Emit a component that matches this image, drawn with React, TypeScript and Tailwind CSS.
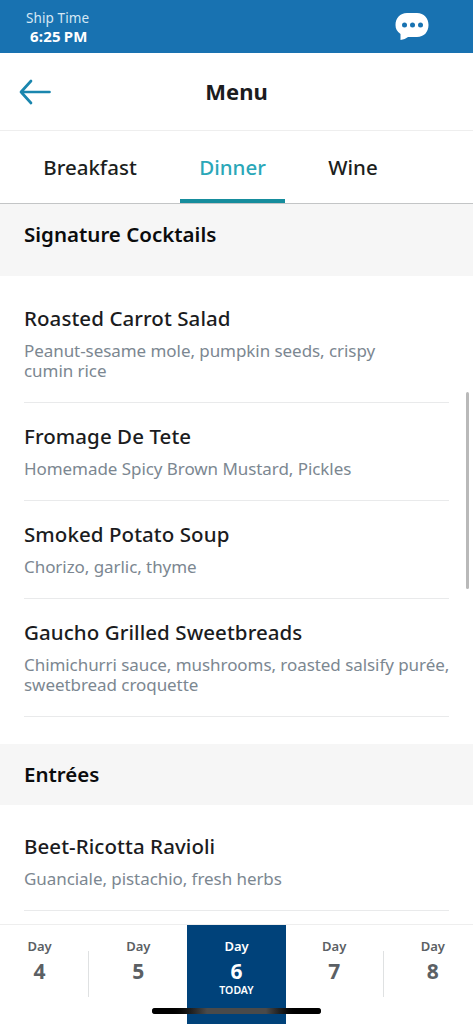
import React from "react";

const tabs = [
  { label: "Breakfast", className: "w-[180px] text-[#1c1e20]", active: false },
  { label: "Dinner", className: "w-[105px] text-[#2aa7b8]", active: true },
  { label: "Wine", className: "w-[136px] text-[#1c1e20]", active: false },
];

const cocktails = [
  {
    name: "Roasted Carrot Salad",
    description: "Peanut-sesame mole, pumpkin seeds, crispy\ncumin rice",
  },
  {
    name: "Fromage De Tete",
    description: "Homemade Spicy Brown Mustard, Pickles",
  },
  { name: "Smoked Potato Soup", description: "Chorizo, garlic, thyme" },
  {
    name: "Gaucho Grilled Sweetbreads",
    description:
      "Chimichurri sauce, mushrooms, roasted salsify purée,\nsweetbread croquette",
  },
];

const entrees = [
  {
    name: "Beet-Ricotta Ravioli",
    description: "Guanciale, pistachio, fresh herbs",
  },
];

const days = [
  { day: 4, today: false, divider: true },
  { day: 5, today: false, divider: false },
  { day: 6, today: true, divider: false },
  { day: 7, today: false, divider: true },
  { day: 8, today: false, divider: false },
];

const StatusHeader: React.FC = () => (
  <header className="flex h-[53px] shrink-0 items-start justify-between bg-[#1872b1] pr-[44px] pl-[26px] text-white">
    <div className="pt-[10px]">
      <div className="text-[13.5px] leading-[17px] tracking-[0.1px] text-[#d5e8f5]">
        Ship Time
      </div>
      <div className="pl-1 text-[15px] leading-[18px] font-bold tracking-[0.2px] [word-spacing:-1px]">
        6:25 PM
      </div>
    </div>
    <svg className="mt-3 h-[29px] w-[34px]" viewBox="0 0 34 29" fill="none">
      <path
        d="M12 1H22C29 1 33.5 6 33.5 13C33.5 20 29 25 22 25H13C11 26.5 8.5 27.5 5.5 28V22C2 19.5 .5 17 .5 13C.5 6 5 1 12 1Z"
        fill="white"
      />
      <circle cx="9.5" cy="13" r="2.5" fill="#1872b1" />
      <circle cx="17.5" cy="13" r="2.5" fill="#1872b1" />
      <circle cx="25.5" cy="13" r="2.5" fill="#1872b1" />
    </svg>
  </header>
);

const MenuItem: React.FC<{ name: string; description: string }> = ({
  name,
  description,
}) => (
  <li className="border-b border-[#e9eaeb] pt-5 pb-[21px]">
    <h3 className="text-[20.5px] leading-[26px] font-medium tracking-[0.07px] text-[#1b1c1e]">
      {name}
    </h3>
    <p className="pt-[10px] text-[17px] leading-5 tracking-[-0.06px] whitespace-pre text-[#7c8791]">
      {description}
    </p>
  </li>
);

export default function App() {
  return (
    <div className="relative flex h-[1024px] w-[473px] flex-col overflow-hidden bg-white font-['Noto_Sans','Liberation_Sans',sans-serif]">
      <StatusHeader />

      <div className="grid h-[78px] shrink-0 grid-cols-[1fr_auto_1fr] items-center border-b border-[#eeeeee] px-[19px]">
        <svg
          className="h-[26px] w-[33px]"
          viewBox="0 0 33 26"
          fill="none"
          stroke="#1a86ae"
          strokeWidth="2.7"
          strokeLinecap="round"
          strokeLinejoin="round"
        >
          <path d="M30.5 13H2M12 2L2 13L12 24" />
        </svg>
        <h1 className="text-[22px] font-bold text-[#1b1c1e]">Menu</h1>
      </div>

      <nav className="flex h-[73px] shrink-0 border-b border-[#c3c5c6]">
        {tabs.map((tab) => (
          <div
            key={tab.label}
            className={`flex flex-col justify-between text-center text-[20.5px] font-medium ${tab.className}`}
          >
            <span className="pt-[23px] leading-[26px]">{tab.label}</span>
            {tab.active && <span className="h-1 bg-[#168d9d]" />}
          </div>
        ))}
      </nav>

      <main className="min-h-0 flex-1 overflow-hidden">
        <h2 className="h-[72px] bg-[#f6f6f6] px-6 pt-[17px] text-[20.5px] leading-[26px] font-semibold text-[#0b0c0d]">
          Signature Cocktails
        </h2>
        <ul className="px-6 pt-[9px] pb-[27px]">
          {cocktails.map((item) => (
            <MenuItem key={item.name} {...item} />
          ))}
        </ul>
        <h2 className="h-[61px] bg-[#f6f6f6] px-6 pt-[17px] text-[20.5px] leading-[26px] font-semibold text-[#0b0c0d]">
          Entrées
        </h2>
        <ul className="px-6 pt-2">
          {entrees.map((item) => (
            <MenuItem key={item.name} {...item} />
          ))}
        </ul>
      </main>

      <footer className="flex h-[100px] shrink-0 justify-center border-t border-[#eeeeee]">
        {days.map(({ day, today, divider }) => (
          <div
            key={day}
            className={`flex w-[98.2px] shrink-0 ${today ? "bg-[#00427a] text-white" : "text-[#5b6064]"}`}
          >
            <div className="flex flex-1 flex-col items-center pt-[13px] font-semibold">
              <span className="text-[13px] leading-[17px]">Day</span>
              <span className="pt-1 text-[21px] leading-[24px] font-bold">
                {day}
              </span>
              {today && (
                <span className="text-[10.5px] leading-[14px]">TODAY</span>
              )}
            </div>
            {divider && <div className="mt-[26px] h-[46px] w-px bg-[#dfe1e2]" />}
          </div>
        ))}
      </footer>

      {/* home indicator */}
      <div className="absolute bottom-[10px] left-[152px] flex h-[6px] w-[169px] overflow-hidden rounded-full bg-[#4a4a4a]">
        <div className="w-[55px] bg-linear-to-r from-black from-30% to-[#4a4a4a]" />
        <div className="ml-auto w-[55px] bg-linear-to-l from-black from-40% to-[#4a4a4a]" />
      </div>
      {/* scroll thumb */}
      <div className="absolute top-[392px] left-[466px] h-[197px] w-[3px] rounded-full bg-[#b9b9b9]" />
    </div>
  );
}
